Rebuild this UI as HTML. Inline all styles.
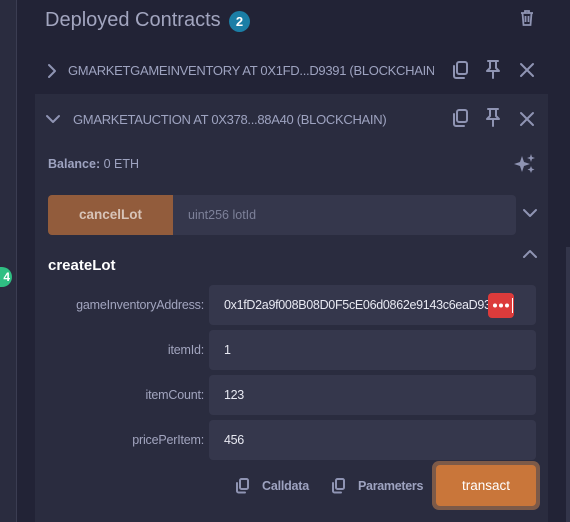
<!DOCTYPE html>
<html><head><style>
*{box-sizing:border-box;margin:0;padding:0}
body{width:570px;height:522px;background:#222336;font-family:"Liberation Sans",sans-serif;position:relative;overflow:hidden}
.a{position:absolute}
.lbl{position:absolute;right:366px;font-size:12.5px;letter-spacing:-0.2px;color:#a2a5bf;text-align:right;width:180px}
.inp{position:absolute;left:209px;width:327px;height:40px;background:#35374c;border-radius:4px;color:#e8e9f2;font-size:12.5px;letter-spacing:-0.3px;line-height:40px;padding-left:15px}
.ico{stroke:#8f94b3;fill:none;stroke-width:2;stroke-linecap:round;stroke-linejoin:round}
.up{font-size:13px;letter-spacing:-0.3px;color:#9ea3c0;white-space:nowrap;overflow:hidden}
</style></head><body>
<div class="a" style="left:0;top:0;width:16px;height:522px;background:#2a2c3f"></div>
<div class="a" style="left:16px;top:0;width:1px;height:522px;background:#3b3d52"></div>
<div class="a" style="left:0;top:267px;width:12px;height:20px;border-radius:0 10px 10px 0;background:#2fbf83;color:#fff;font-size:12px;font-weight:bold;line-height:20px;text-align:right;padding-right:2px">4</div>
<div class="a" style="left:566px;top:247px;width:4px;height:275px;background:#33354a"></div>

<div class="a" style="left:45px;top:9px;font-size:20px;color:#a2a5bf">Deployed Contracts</div>
<div class="a" style="left:229px;top:11px;width:21px;height:21px;border-radius:50%;background:#1b7ea6;color:#fff;font-size:13px;font-weight:bold;text-align:center;line-height:21px">2</div>
<svg class="a" style="left:519px;top:9px" width="16" height="18" viewBox="0 0 16 18"><path d="M2 4h12M6 4V2h4v2M3.5 4l1 12h7l1-12M6.5 7v6M9.5 7v6" stroke="#8f94b3" stroke-width="1.8" fill="none"/></svg>

<svg class="a" style="left:46px;top:63px" width="12" height="16"><path d="M3 2l6 6-6 6" class="ico" stroke-width="2.2"/></svg>
<div class="a up" style="left:68px;top:63px;width:366px">GMARKETGAMEINVENTORY AT 0X1FD...D9391 (BLOCKCHAIN)</div>

<div class="a" style="left:35px;top:94px;width:513px;height:428px;background:#2a2c3f"></div>
<svg class="a" style="left:45px;top:113px" width="16" height="12"><path d="M2 3l6 6 6-6" class="ico" stroke-width="2.2"/></svg>
<div class="a up" style="left:73px;top:112px">GMARKETAUCTION AT 0X378...88A40 (BLOCKCHAIN)</div>

<svg class="a" style="left:451px;top:60px" width="18" height="20" viewBox="0 0 18 20"><rect x="6" y="2" width="10" height="12" rx="2" class="ico" stroke-width="1.8"/><path d="M3 6v10a2 2 0 0 0 2 2h8" class="ico" stroke-width="1.8"/></svg>
<svg class="a" style="left:485px;top:59px" width="16" height="20" viewBox="0 0 16 20"><path d="M3 2h10M5 2v7L2 12h12l-3-3V2M8 12v7" class="ico" stroke-width="1.8"/></svg>
<svg class="a" style="left:519px;top:62px" width="16" height="16"><path d="M2 2l12 12M14 2L2 14" class="ico" stroke-width="2.4"/></svg>
<svg class="a" style="left:451px;top:108px" width="18" height="20" viewBox="0 0 18 20"><rect x="6" y="2" width="10" height="12" rx="2" class="ico" stroke-width="1.8"/><path d="M3 6v10a2 2 0 0 0 2 2h8" class="ico" stroke-width="1.8"/></svg>
<svg class="a" style="left:485px;top:107px" width="16" height="20" viewBox="0 0 16 20"><path d="M3 2h10M5 2v7L2 12h12l-3-3V2M8 12v7" class="ico" stroke-width="1.8"/></svg>
<svg class="a" style="left:519px;top:111px" width="16" height="16"><path d="M2 2l12 12M14 2L2 14" class="ico" stroke-width="2.4"/></svg>

<div class="a" style="left:48px;top:157px;font-size:12.5px;color:#9ea3c0"><b>Balance:</b> 0 ETH</div>
<svg class="a" style="left:514px;top:153px" width="22" height="22" viewBox="0 0 22 22" fill="#8f94b3"><path d="M8 3l2 6 6 2-6 2-2 6-2-6-6-2 6-2z"/><path d="M17 1l1 3 3 1-3 1-1 3-1-3-3-1 3-1z"/><path d="M17 13l1 2.5 2.5 1-2.5 1-1 2.5-1-2.5-2.5-1 2.5-1z"/></svg>

<div class="a" style="left:48px;top:195px;width:125px;height:40px;background:#925c3c;border-radius:4px 0 0 4px;color:#d8c4b8;font-size:13.5px;font-weight:bold;text-align:center;line-height:40px">cancelLot</div>
<div class="a" style="left:173px;top:195px;width:343px;height:40px;background:#35374c;border-radius:0 4px 4px 0;color:#7d8199;font-size:12.5px;line-height:40px;padding-left:15px">uint256 lotId</div>
<svg class="a" style="left:522px;top:207px" width="16" height="12"><path d="M2 3l6 6 6-6" class="ico" stroke-width="2.2"/></svg>
<svg class="a" style="left:522px;top:248px" width="16" height="12"><path d="M2 9l6-6 6 6" class="ico" stroke-width="2.2"/></svg>

<div class="a" style="left:48px;top:257px;font-size:15px;font-weight:bold;color:#fff">createLot</div>

<div class="lbl" style="top:298px">gameInventoryAddress:</div>
<div class="inp" style="top:285px;overflow:hidden;white-space:nowrap">0x1fD2a9f008B08D0F5cE06d0862e9143c6eaD93</div>
<div class="a" style="left:488px;top:293px;width:26px;height:25px;background:#dc3b3b;border-radius:4px"></div>
<svg class="a" style="left:488px;top:293px" width="26" height="25"><circle cx="7" cy="12.5" r="2" fill="#fff"/><circle cx="13" cy="12.5" r="2" fill="#fff"/><circle cx="19" cy="12.5" r="2" fill="#fff"/></svg>
<div class="a" style="left:512px;top:298px;width:1px;height:15px;background:#fff"></div>

<div class="lbl" style="top:343px">itemId:</div>
<div class="inp" style="top:330px">1</div>
<div class="lbl" style="top:388px">itemCount:</div>
<div class="inp" style="top:375px">123</div>
<div class="lbl" style="top:433px">pricePerItem:</div>
<div class="inp" style="top:420px">456</div>

<svg class="a" style="left:235px;top:478px" width="14" height="16" viewBox="0 0 14 16"><rect x="5" y="1" width="8" height="10" rx="1.5" class="ico" stroke-width="1.5"/><path d="M2 5v8a1.5 1.5 0 0 0 1.5 1.5H10" class="ico" stroke-width="1.5"/></svg>
<div class="a" style="left:262px;top:479px;font-size:12.5px;letter-spacing:-0.2px;font-weight:bold;color:#9ea3c0">Calldata</div>
<svg class="a" style="left:331px;top:478px" width="14" height="16" viewBox="0 0 14 16"><rect x="5" y="1" width="8" height="10" rx="1.5" class="ico" stroke-width="1.5"/><path d="M2 5v8a1.5 1.5 0 0 0 1.5 1.5H10" class="ico" stroke-width="1.5"/></svg>
<div class="a" style="left:358px;top:479px;font-size:12.5px;letter-spacing:-0.3px;font-weight:bold;color:#9ea3c0">Parameters</div>

<div class="a" style="left:432px;top:461px;width:108px;height:49px;background:#7d5a48;border-radius:7px"></div>
<div class="a" style="left:436px;top:465px;width:100px;height:41px;background:#c9763a;border-radius:4px;color:#fff;font-size:13.5px;text-align:center;line-height:41px">transact</div>
</body></html>
